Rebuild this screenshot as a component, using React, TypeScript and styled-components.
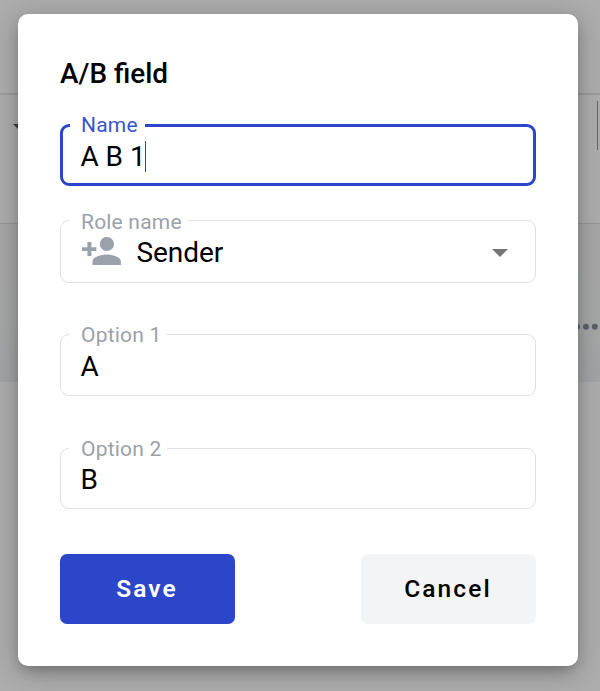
import React from "react";
import styled, { createGlobalStyle } from "styled-components";

const GlobalStyle = createGlobalStyle`
  * { box-sizing: border-box; }
  body { margin: 0; background: #adadad; font-family: Roboto, sans-serif; overflow: hidden; }
`;

const Screen = styled.main`
  display: grid;
  width: 600px;
  height: 691px;
  overflow: hidden;
`;

const Page = styled.div`
  grid-area: 1 / 1;
  display: flex;
  flex-direction: column;
  background: #adadad;
`;

const PageHeader = styled.div`
  height: 95px;
  border-bottom: 2px solid #9c9c9c;
`;

const PageToolbar = styled.div`
  display: flex;
  justify-content: space-between;
  height: 129px;
  border-bottom: 1px solid #969898;
`;

const ToolbarArrow = styled.svg`
  width: 14px;
  height: 7px;
  margin: 29px 0 0 13px;
  fill: #3f3f3f;
`;

const ToolbarDivider = styled.div`
  width: 1px;
  height: 49px;
  margin: 6px 2px 0 0;
  background: #666;
`;

const PageRow = styled.div`
  display: flex;
  justify-content: flex-end;
  height: 158px;
  padding: 99px 2px 0 0;
  background: linear-gradient(#a7a7a7 0%, #a6a7a7 65%, #a2a4a5 100%);
`;

const Dots = styled.svg`
  width: 26px;
  height: 8px;
  fill: #5b626c;
`;

const Dialog = styled.section`
  grid-area: 1 / 1;
  z-index: 1;
  display: flex;
  flex-direction: column;
  width: 560px;
  height: 652px;
  margin: 14px 0 0 18px;
  padding: 42px;
  border-radius: 10px;
  background: #fff;
  box-shadow: 0 7px 14px -4px rgba(0, 0, 0, 0.24), 0 5px 28px rgba(0, 0, 0, 0.25);
`;

const Title = styled.h1`
  margin: 0;
  height: 68px;
  font-size: 27.9px;
  line-height: 35px;
  font-weight: 500;
  color: #000;
`;

const Field = styled.div<{ $height: number; $gap: number; $active?: boolean }>`
  position: relative;
  flex: none;
  display: flex;
  align-items: center;
  height: ${(p) => p.$height}px;
  margin-bottom: ${(p) => p.$gap}px;
  padding: ${(p) => (p.$active ? "3px 17.5px 0" : "3px 20px 0 19.5px")};
  border: ${(p) => (p.$active ? "3px solid #2b46c8" : "1px solid #e0e0e0")};
  border-radius: 9px;
`;

const Label = styled.label<{ $width: number; $top: number; $active?: boolean }>`
  position: absolute;
  top: ${(p) => p.$top}px;
  left: ${(p) => (p.$active ? 7 : 8)}px;
  width: ${(p) => p.$width}px;
  padding-left: ${(p) => (p.$active ? 11 : 12)}px;
  background: #fff;
  color: ${(p) => (p.$active ? "#3c55cd" : "#9ba1aa")};
  font-size: 21px;
  line-height: 25px;
  letter-spacing: 0.2px;
  white-space: nowrap;
`;

const Value = styled.span`
  color: #000;
  font-size: 28px;
  line-height: 32px;
  letter-spacing: -0.05px;
`;

const Caret = styled.span`
  width: 1px;
  height: 31px;
  margin-left: -0.5px;
  background: #2b46c8;
`;

const PersonIcon = styled.svg`
  width: 39px;
  height: 28px;
  margin: -5px 15.5px 0 1.5px;
  fill: #9aa1aa;
`;

const SelectArrow = styled.svg`
  width: 16px;
  height: 8px;
  margin: 0 7px 0 auto;
  fill: #757575;
`;

const Actions = styled.div`
  display: flex;
  justify-content: space-between;
`;

const Button = styled.button<{ $primary?: boolean }>`
  width: 175px;
  height: 70px;
  padding: 0 1px 0 0;
  border: 0;
  border-radius: 7px;
  background: ${(p) => (p.$primary ? "#2b46c8" : "#f3f4f6")};
  color: ${(p) => (p.$primary ? "#fff" : "#000")};
  font: ${(p) => (p.$primary ? 600 : 500)} 24.5px/30px Roboto, sans-serif;
  letter-spacing: 2.1px;
`;

export default function App() {
  return (
    <Screen>
      <GlobalStyle />
      <Page>
        <PageHeader />
        <PageToolbar>
          <ToolbarArrow viewBox="0 0 14 7"><path d="M0 0h14L7 7z" /></ToolbarArrow>
          <ToolbarDivider />
        </PageToolbar>
        <PageRow>
          <Dots viewBox="0 0 26 8">
            <circle cx="5" cy="3.7" r="3" />
            <circle cx="14" cy="3.7" r="3" />
            <circle cx="22.8" cy="3.7" r="3" />
          </Dots>
        </PageRow>
      </Page>
      <Dialog role="dialog">
        <Title>A/B field</Title>
        <Field $height={62} $gap={34} $active>
          <Label $width={75} $top={-14} $active>Name</Label>
          <Value>A B 1</Value>
          <Caret />
        </Field>
        <Field $height={63} $gap={51}>
          <Label $width={119} $top={-11}>Role name</Label>
          <PersonIcon viewBox="0 0 39 28">
            <path d="M17.8 7a7.1 7.1 0 1 0 14.2 0a7.1 7.1 0 1 0-14.2 0M5.4 5h4v5.2h4.9v3.8H9.4v5h-4v-5H0v-3.8h5.4zM10.5 28v-3.8c0-4.6 9-6.8 14.2-6.8s14.2 2.2 14.2 6.8V28z" />
          </PersonIcon>
          <Value>Sender</Value>
          <SelectArrow viewBox="0 0 16 8"><path d="M0 0h16L8 8z" /></SelectArrow>
        </Field>
        <Field $height={62} $gap={52}>
          <Label $width={98} $top={-12}>Option 1</Label>
          <Value>A</Value>
        </Field>
        <Field $height={61} $gap={45}>
          <Label $width={98} $top={-12}>Option 2</Label>
          <Value>B</Value>
        </Field>
        <Actions>
          <Button $primary>Save</Button>
          <Button>Cancel</Button>
        </Actions>
      </Dialog>
    </Screen>
  );
}
